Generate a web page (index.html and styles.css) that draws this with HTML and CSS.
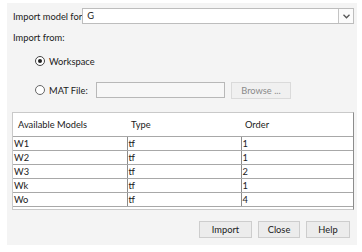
FILE: index.html
```html
<!DOCTYPE html>
<html>
<head>
    <title>Import LTI Model</title>
    <link rel="stylesheet" href="styles.css">
</head>
<body>
    <div id="dialog">
        <div class="model-row">
            <span class="label">Import model for</span>
            <div class="combo">
                <div class="combo-value">G</div>
                <div class="combo-arrow">
                    <svg width="7" height="5" viewBox="0 0 7 5"><path d="M0.5 0.8 L3.5 3.8 L6.5 0.8" fill="none" stroke="#555" stroke-width="1.3"/></svg>
                </div>
            </div>
        </div>

        <div class="section-title">Import from:</div>

        <div class="radio-row workspace-row">
            <span class="radio radio-on"></span>
            <span class="label">Workspace</span>
        </div>

        <div class="radio-row mat-row">
            <span class="radio"></span>
            <span class="label mat-label">MAT File:</span>
            <div class="text-input"></div>
            <div class="button button-disabled browse">Browse ...</div>
        </div>

        <div class="models">
            <table>
                <colgroup>
                    <col class="col-name">
                    <col class="col-type">
                    <col>
                </colgroup>
                <thead>
                    <tr>
                        <th class="first">Available Models</th>
                        <th>Type</th>
                        <th>Order</th>
                    </tr>
                </thead>
                <tbody>
                    <tr><td>W1</td><td>tf</td><td>1</td></tr>
                    <tr><td>W2</td><td>tf</td><td>1</td></tr>
                    <tr><td>W3</td><td>tf</td><td>2</td></tr>
                    <tr><td>Wk</td><td>tf</td><td>1</td></tr>
                    <tr><td>Wo</td><td>tf</td><td>4</td></tr>
                </tbody>
            </table>
        </div>

        <div class="button-row">
            <div class="button import">Import</div>
            <div class="button close">Close</div>
            <div class="button help">Help</div>
        </div>
    </div>
</body>
</html>
```

FILE: styles.css
```css
body {
    margin: 0;
    background-color: #ffffff;
    font-family: Lato, "Noto Sans", sans-serif;
    font-size: 9.3px;
    color: #1a1a1a;
}

#dialog {
    width: 350px;
    height: 242px;
    margin: 3px 0 0 7px;
    padding: 6px 3px 0 5px;
    box-sizing: border-box;
    background-color: #f4f4f4;
}

.label {
    white-space: nowrap;
}

.model-row {
    display: flex;
    align-items: center;
    height: 14px;
}

.model-row .label {
    flex: 1;
    margin-left: 1px;
}

.combo {
    display: flex;
    width: 271px;
    height: 14px;
    border: 1px solid #bdbdbd;
    background-color: #fbfbfb;
}

.combo-value {
    flex: 1;
    padding-left: 4px;
    line-height: 14px;
    border-right: 1px solid #c4c4c4;
    background-color: #ffffff;
}

.combo-arrow {
    width: 14px;
    display: flex;
    align-items: center;
    justify-content: center;
}

.section-title {
    margin: 8px 0 0 1px;
    line-height: 14px;
}

.radio-row {
    display: flex;
    align-items: center;
    padding-left: 23px;
}

.workspace-row {
    margin-top: 9px;
    height: 14px;
}

.mat-row {
    margin-top: 14px;
    height: 16px;
}

.radio {
    width: 8px;
    height: 8px;
    border: 1px solid #444;
    border-radius: 50%;
    background-color: #fff;
    margin-right: 4px;
    position: relative;
}

.mat-row .radio {
    border-color: #666;
}

.radio-on::after {
    content: "";
    position: absolute;
    left: 2px;
    top: 2px;
    width: 4px;
    height: 4px;
    border-radius: 50%;
    background-color: #222;
}

.mat-label {
    width: 47px;
}

.text-input {
    width: 127px;
    height: 14px;
    border: 1px solid #b8b8b8;
    background-color: #f7f7f7;
}

.button {
    display: flex;
    align-items: center;
    justify-content: center;
    height: 15px;
    border: 1px solid #cdcdcd;
    background-color: #ececec;
}

.browse {
    width: 58px;
    margin-left: 6px;
}

.button-disabled {
    color: #8a8a8a;
    background-color: #f0f0f0;
    border-color: #dadada;
}

.models {
    margin-top: 14px;
    width: 342px;
    height: 98px;
    box-sizing: border-box;
    border: 1px solid #c9c9c9;
    border-right: 1px solid #8c8c8c;
    background-color: #ffffff;
}

table {
    width: 340px;
    border-collapse: collapse;
    table-layout: fixed;
}

.col-name {
    width: 114px;
}

.col-type {
    width: 114px;
}

th {
    height: 23px;
    font-weight: normal;
    text-align: left;
    padding: 0 0 0 4px;
}

th.first {
    padding-left: 5px;
}

td {
    height: 13px;
    padding: 0 0 0 1px;
    line-height: 13px;
    border-top: 1px solid #a8a8a8;
    border-bottom: 1px solid #a8a8a8;
}

td + td {
    border-left: 1px solid #8c8c8c;
}

.button-row {
    display: flex;
    justify-content: flex-end;
    margin-top: 11px;
    padding-right: 4px;
}

.import {
    width: 51px;
}

.close {
    width: 40px;
    margin-left: 6px;
}

.help {
    width: 42px;
    margin-left: 6px;
}
```
